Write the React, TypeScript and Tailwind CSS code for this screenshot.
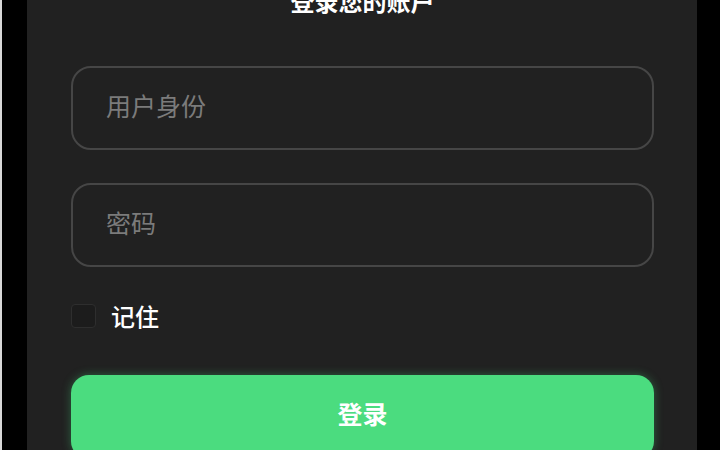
import React from "react";

export default function App() {
  const font = { fontFamily: '"Noto Sans CJK SC", "Noto Sans", sans-serif' };
  return (
    <div
      className="w-[720px] h-[450px] bg-black overflow-hidden flex border-l-2 border-[#d9d9d9]"
      style={font}
    >
      <div className="ml-[25px] w-[670px] h-full bg-[#212121] pl-[44px] pr-[43px] flex flex-col">
        <h1 className="shrink-0 -mt-[15px] h-8 leading-8 text-center text-[24px] font-bold text-white">
          登录您的账户
        </h1>
        <input
          placeholder="用户身份"
          className="shrink-0 mt-[49px] h-[84px] w-full rounded-[20px] border-2 border-[#464646] bg-transparent px-[33px] pb-[6px] text-[25px] text-white placeholder:text-[#7b7b7b] outline-none"
        />
        <input
          type="password"
          placeholder="密码"
          className="shrink-0 mt-[33px] h-[84px] w-full rounded-[20px] border-2 border-[#464646] bg-transparent px-[33px] pb-[6px] text-[25px] text-white placeholder:text-[#7b7b7b] outline-none"
        />
        <label className="shrink-0 mt-[37px] flex items-center gap-[15px] h-[24px]">
          <span className="w-[25px] h-[24px] rounded-[4px] border border-[#2e2e2e] bg-[#1c1c1c]" />
          <span className="text-[24px] leading-none font-medium text-white">记住</span>
        </label>
        <button className="shrink-0 mt-[47px] h-[84px] w-full rounded-[18px] bg-[#4bdc7f] pb-[6px] text-[25px] font-bold text-white shadow-[0_0_10px_rgba(74,222,128,0.35)]">
          登录
        </button>
      </div>
    </div>
  );
}
